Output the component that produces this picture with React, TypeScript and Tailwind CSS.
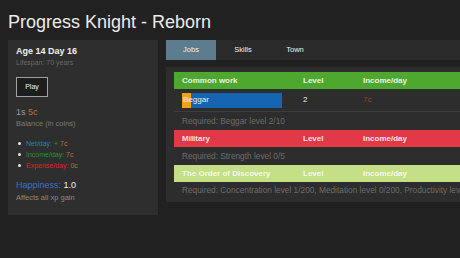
import React from "react";

const font = { fontFamily: '"Liberation Sans", Arial, sans-serif' };

function Header({ name, bg, text, h }: { name: string; bg: string; text: string; h: string }) {
  return (
    <div className={`flex items-center font-bold text-[8px] whitespace-nowrap ${h} ${bg} ${text}`}>
      <div className="w-[129px] shrink-0 pl-[8px]">{name}</div>
      <div className="w-[60px] shrink-0">Level</div>
      <div>Income/day</div>
    </div>
  );
}

function Req({ children, h }: { children: React.ReactNode; h: string }) {
  return (
    <div className={`flex items-center pl-[8px] text-[8.3px] text-[#6c6c6c] whitespace-nowrap ${h}`}>
      {children}
    </div>
  );
}

function Bullet({ children, color }: { children: React.ReactNode; color: string }) {
  return (
    <div className={`flex items-center h-[11px] text-[7px] leading-[11px] whitespace-nowrap ${color}`}>
      <span className="ml-[2px] mr-[5px] w-[3px] h-[3px] rounded-full bg-[#e6e6e6] shrink-0" />
      <span>{children}</span>
    </div>
  );
}

export default function App() {
  return (
    <div className="w-[460px] h-[258px] bg-[#212121] overflow-hidden text-white" style={font}>
      <div className="h-[40px] pl-[8px] pt-[13px] text-[18px] leading-[18px] text-[#ebebeb] whitespace-nowrap">
        Progress Knight - Reborn
      </div>
      <div className="flex gap-[8px] pl-[8px]">
        <div className="w-[150px] shrink-0 h-[175px] bg-[#2e2e2e] pl-[8px] pt-[5px]">
          <div className="text-[9px] font-bold leading-[12px] text-[#efefef]">Age 14 Day 16</div>
          <div className="mt-[1px] text-[7px] leading-[10px] text-[#686868]">Lifespan: 70 years</div>
          <div className="mt-[9px] w-[32px] h-[20px] border border-[#a0a0a0] bg-[#1d1d1d] flex items-center justify-center text-[7px] text-[#efefef]">
            Play
          </div>
          <div className="mt-[9px] text-[9px] leading-[12px] text-[#9c9c9c]">
            1s <span className="text-[#b8703c]">5c</span>
          </div>
          <div className="mt-[1px] text-[7.5px] leading-[10px] text-[#7a7a7a]">Balance (in coins)</div>
          <div className="mt-[9px]">
            <Bullet color="text-[#2a7ac2]">
              Net/day: <span className="text-[#2c9a2c]">+</span> <span className="text-[#b8703c]">7c</span>
            </Bullet>
            <Bullet color="text-[#259a25]">
              Income/day: <span className="text-[#b8703c]">7c</span>
            </Bullet>
            <Bullet color="text-[#e21f1f]">
              Expense/day: <span className="text-[#b8703c]">0c</span>
            </Bullet>
          </div>
          <div className="mt-[8px] text-[9px] leading-[12px] text-[#3573c6]">
            Happiness: <span className="text-[#efefef]">1.0</span>
          </div>
          <div className="mt-[2px] text-[7.5px] leading-[10px] text-[#8a8a8a]">Affects all xp gain</div>
        </div>
        <div className="flex-1 min-w-0">
          <div className="flex h-[20px] bg-[#2a2a2a] text-[7.5px] text-[#eeeeee]">
            <div className="w-[50px] bg-[#5d7d8e] flex items-center justify-center">Jobs</div>
            <div className="w-[54px] flex items-center justify-center">Skills</div>
            <div className="w-[50px] flex items-center justify-center">Town</div>
          </div>
          <div className="mt-[7px] h-[135px] bg-[#2d2d2d] pl-[8px] pt-[5px] overflow-hidden">
            <Header name="Common work" h="h-[17px]" bg="bg-[#4ea72e]" text="text-[#e8f4e0]" />
            <div className="flex h-[23px] items-center text-[8px] border-b border-[#3b3b3b]">
              <div className="w-[129px] shrink-0 pl-[8px]">
                <div className="relative w-[100px] h-[15px] bg-[#1565b3]">
                  <div className="absolute left-0 top-0 h-full w-[9px] bg-[#f3a01d]" />
                  <div className="absolute left-[1px] top-0 h-full flex items-center text-[8px] text-[#f0f0f0]">Beggar</div>
                </div>
              </div>
              <div className="w-[60px] shrink-0 text-[#eeeeee]">2</div>
              <div className="text-[#8e4a2e]">7c</div>
            </div>
            <Req h="h-[18px]">Required: Beggar level 2/10</Req>
            <Header name="Military" h="h-[17px]" bg="bg-[#e23946]" text="text-[#fbe2e4]" />
            <Req h="h-[18px]">Required: Strength level 0/5</Req>
            <Header name="The Order of Discovery" h="h-[17px]" bg="bg-[#c5df86]" text="text-[#f6fbea]" />
            <Req h="h-[17px]">Required: Concentration level 1/200, Meditation level 0/200, Productivity level 0/200</Req>
          </div>
        </div>
      </div>
    </div>
  );
}
